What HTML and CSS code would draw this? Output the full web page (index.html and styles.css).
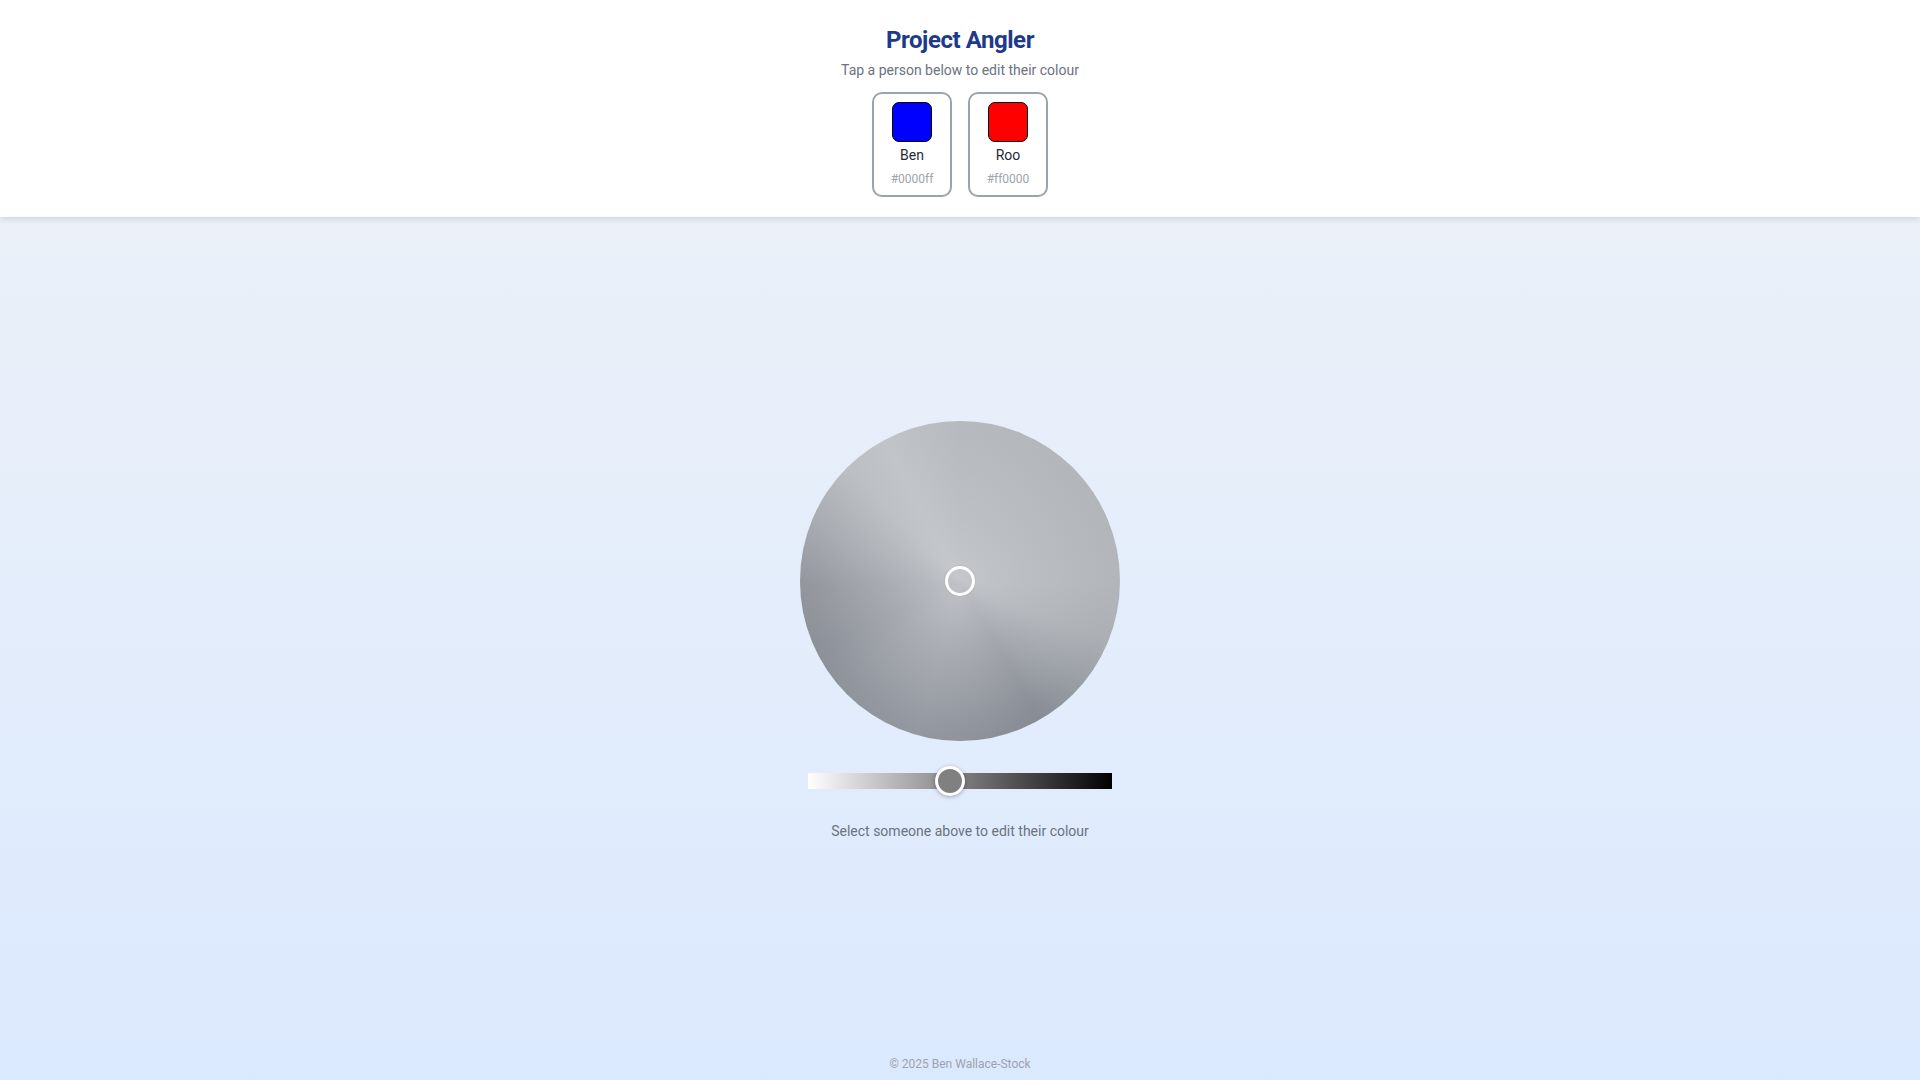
FILE: index.html
```html
<!DOCTYPE html>
<html lang="en">
<head>
<meta charset="utf-8">
<title>Project Angler</title>
<link rel="stylesheet" href="styles.css">
</head>
<body>
<header class="header">
  <h1 class="title">Project Angler</h1>
  <p class="subtitle">Tap a person below to edit their colour</p>
  <div class="people">
    <button class="person">
      <span class="swatch swatch-blue"></span>
      <span class="name">Ben</span>
      <span class="hex">#0000ff</span>
    </button>
    <button class="person">
      <span class="swatch swatch-red"></span>
      <span class="name">Roo</span>
      <span class="hex">#ff0000</span>
    </button>
  </div>
</header>
<main class="main">
  <div class="wheel">
    <div class="wheel-handle"></div>
  </div>
  <div class="slider">
    <div class="slider-thumb"></div>
  </div>
  <p class="hint">Select someone above to edit their colour</p>
</main>
<footer class="footer">© 2025 Ben Wallace-Stock</footer>
</body>
</html>
```

FILE: styles.css
```css
* { box-sizing: border-box; }
html, body { margin: 0; padding: 0; }
body {
  min-height: 100vh;
  display: flex;
  flex-direction: column;
  font-family: Roboto, "Liberation Sans", Arial, sans-serif;
  background: linear-gradient(180deg, #eff2f7 0%, #dbe9fe 100%);
  background-attachment: fixed;
}
.header {
  background: #ffffff;
  padding: 24px 0 20px;
  display: flex;
  flex-direction: column;
  align-items: center;
  box-shadow: 0 2px 6px rgba(0, 0, 0, 0.12);
  position: relative;
  z-index: 1;
}
.title {
  margin: 0;
  font-size: 24px;
  line-height: 32px;
  font-weight: 700;
  color: #1e3a8a;
  letter-spacing: -0.45px;
}
.subtitle {
  margin: 4px 0 0;
  font-size: 14px;
  line-height: 20px;
  color: #6b7280;
}
.people {
  margin-top: 12px;
  display: flex;
  gap: 16px;
}
.person {
  width: 80px;
  height: 105px;
  border: 2px solid #9ca3af;
  border-radius: 10px;
  background: #ffffff;
  padding: 8px 0;
  display: flex;
  flex-direction: column;
  align-items: center;
  font-family: inherit;
  font-weight: 400;
  cursor: pointer;
}
.swatch {
  width: 40px;
  height: 40px;
  border-radius: 7px;
  border: 1px solid #000000;
  display: block;
}
.swatch-blue { background: #0000ff; }
.swatch-red { background: #ff0000; }
.name {
  margin-top: 3px;
  font-size: 14px;
  line-height: 20px;
  color: #1f2937;
}
.hex {
  margin-top: 6px;
  font-size: 12px;
  line-height: 16px;
  color: #9ca3af;
}
.main {
  flex: 1;
  display: flex;
  flex-direction: column;
  align-items: center;
  justify-content: center;
  padding-bottom: 3px;
}
.wheel {
  width: 320px;
  height: 320px;
  border-radius: 50%;
  position: relative;
  background:
    radial-gradient(circle at 50% 50%, rgba(197, 200, 205, 0.9) 0%, rgba(194, 197, 202, 0.55) 30%, rgba(190, 193, 198, 0.15) 65%, rgba(190, 193, 198, 0) 85%),
    conic-gradient(from 0deg,
      #b5b8bc 0deg,
      #b1b4b8 45deg,
      #b1b4b8 90deg,
      #a9acb1 112deg,
      #959aa1 130deg,
      #80848c 150deg,
      #878b93 170deg,
      #8e929a 195deg,
      #8b8f97 220deg,
      #868a92 245deg,
      #8d9197 268deg,
      #a3a6ac 290deg,
      #bbbec2 315deg,
      #c1c4c8 332deg,
      #b5b8bc 360deg);
}
.wheel-handle {
  position: absolute;
  left: 145px;
  top: 145px;
  width: 30px;
  height: 30px;
  border-radius: 50%;
  border: 3px solid #ffffff;
  box-shadow: 0 0 2px rgba(0, 0, 0, 0.15);
}
.slider {
  margin-top: 32px;
  width: 304px;
  height: 16px;
  position: relative;
  background: linear-gradient(90deg, #ffffff 0%, #000000 100%);
}
.slider-thumb {
  position: absolute;
  left: 127px;
  top: -7px;
  width: 30px;
  height: 30px;
  border-radius: 50%;
  background: #808080;
  border: 3px solid #ffffff;
  box-shadow: 0 1px 4px rgba(0, 0, 0, 0.3);
}
.hint {
  margin: 32px 0 0;
  font-size: 14px;
  line-height: 20px;
  color: #6b7280;
}
.footer {
  padding: 8px 0;
  text-align: center;
  font-size: 12px;
  line-height: 16px;
  color: #9ca3af;
}
```
